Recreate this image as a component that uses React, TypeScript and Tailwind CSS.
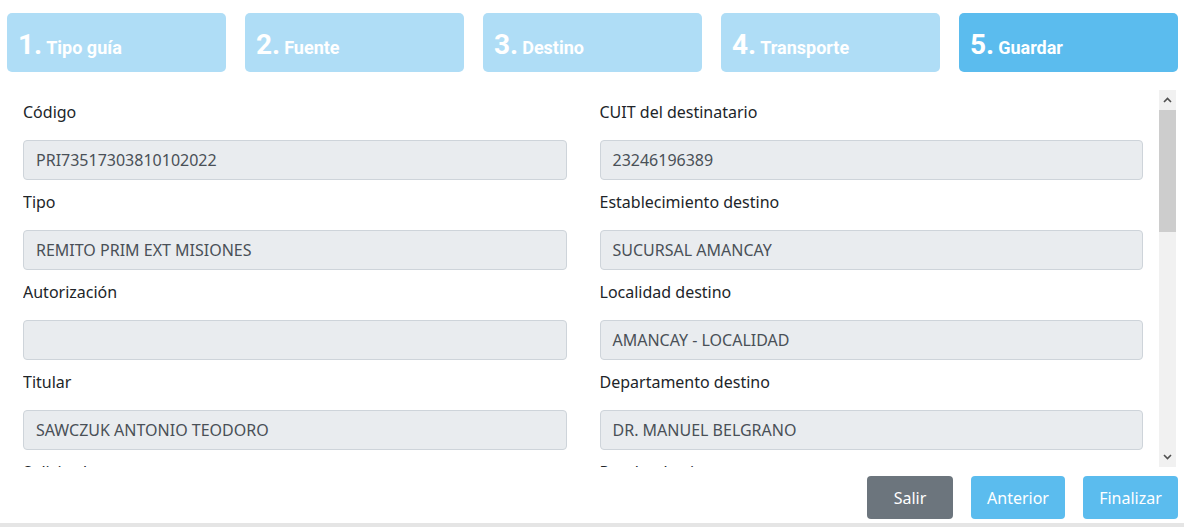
import React from 'react';

const steps = [
  { n: '1.', label: 'Tipo guía' },
  { n: '2.', label: 'Fuente' },
  { n: '3.', label: 'Destino' },
  { n: '4.', label: 'Transporte' },
  { n: '5.', label: 'Guardar', active: true },
];

const left = [
  { label: 'Código', value: 'PRI73517303810102022' },
  { label: 'Tipo', value: 'REMITO PRIM EXT MISIONES' },
  { label: 'Autorización', value: '' },
  { label: 'Titular', value: 'SAWCZUK ANTONIO TEODORO' },
  { label: 'Solicitud', value: '' },
];

const right = [
  { label: 'CUIT del destinatario', value: '23246196389' },
  { label: 'Establecimiento destino', value: 'SUCURSAL AMANCAY' },
  { label: 'Localidad destino', value: 'AMANCAY - LOCALIDAD' },
  { label: 'Departamento destino', value: 'DR. MANUEL BELGRANO' },
  { label: 'Prueba destino', value: '' },
];

function Field({ label, value }: { label: string; value: string }) {
  return (
    <div className="pb-[10px]">
      <p className="h-6 mb-4 text-[16px] leading-6 text-[#212529]">{label}</p>
      <div className="h-10 rounded border border-[#ced4da] bg-[#e9ecef] px-3 flex items-center text-[16px] text-[#495057]">
        {value}
      </div>
    </div>
  );
}

export default function App() {
  return (
    <div
      className="w-[1184px] h-[527px] bg-white overflow-hidden flex flex-col"
      style={{ fontFamily: '"Noto Sans", "Open Sans", sans-serif' }}
    >
      <div className="flex gap-[19px] pl-[7px] pr-[6px] pt-[13px]">
        {steps.map((s) => (
          <div
            key={s.n}
            className={`h-[59px] flex-1 rounded-[5px] flex items-center pl-[11px] pt-[5px] text-white ${
              s.active ? 'bg-[#5bbcee]' : 'bg-[#afddf6]'
            }`}
            style={{ fontFamily: 'Roboto, sans-serif' }}
          >
            <span className="flex items-baseline gap-[4px] font-bold">
              <span className="text-[28px] leading-none">{s.n}</span>
              <span className="text-[18px] leading-none">{s.label}</span>
            </span>
          </div>
        ))}
      </div>

      <div className="mt-[18px] h-[377px] flex pl-[23px] pr-[8px]">
        <div className="flex-1 overflow-hidden pt-[10px] pr-[16px] grid grid-cols-2 gap-x-[33px] content-start">
          <div>
            {left.map((f) => (
              <Field key={f.label} {...f} />
            ))}
          </div>
          <div>
            {right.map((f) => (
              <Field key={f.label} {...f} />
            ))}
          </div>
        </div>
        <div className="w-[17px] bg-[#f1f1f1] flex flex-col">
          <div className="h-[20px] flex items-center justify-center">
            <svg width="9" height="6" viewBox="0 0 9 6">
              <path d="M1 5 L4.5 1.5 L8 5" stroke="#505050" strokeWidth="1.6" fill="none" />
            </svg>
          </div>
          <div className="h-[122px] bg-[#cdcdcd]" />
          <div className="flex-1" />
          <div className="h-[20px] flex items-center justify-center">
            <svg width="9" height="6" viewBox="0 0 9 6">
              <path d="M1 1 L4.5 4.5 L8 1" stroke="#505050" strokeWidth="1.6" fill="none" />
            </svg>
          </div>
        </div>
      </div>

      <div className="flex justify-end gap-[18px] pr-[6px] mt-[9px]">
        <button className="h-[43px] w-[86px] rounded bg-[#6c757d] text-white text-[16px]">Salir</button>
        <button className="h-[43px] w-[94px] rounded bg-[#5bbcee] text-white text-[16px]">Anterior</button>
        <button className="h-[43px] w-[95px] rounded bg-[#5bbcee] text-white text-[16px]">Finalizar</button>
      </div>

      <div className="mt-auto h-[4px] bg-[#e5e5e5]" />
    </div>
  );
}
